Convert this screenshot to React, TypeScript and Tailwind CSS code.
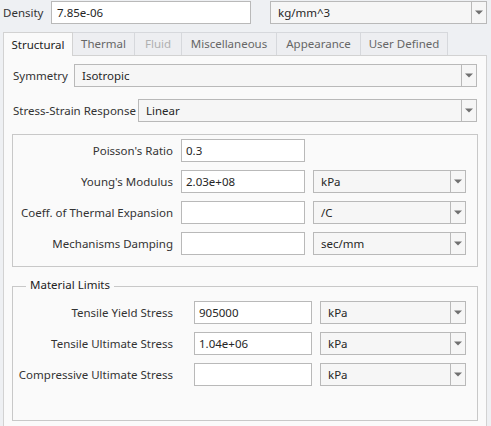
import React from "react";

const Arrow = () => (
  <svg width="8" height="5" viewBox="0 0 8 5">
    <path d="M0 0.5h8L4 4.5z" fill="#707070" />
  </svg>
);

const Select = ({ value, className }: { value: string; className: string }) => (
  <div className={`flex h-[23px] border border-[#b9b9b9] bg-[#f6f6f6] ${className}`}>
    <div className="flex flex-1 items-center pl-[7px] text-[#262626]">{value}</div>
    <div className="flex w-[15px] items-center justify-center border-l border-[#b9b9b9]">
      <Arrow />
    </div>
  </div>
);

const Input = ({ value, className }: { value: string; className: string }) => (
  <div className={`flex h-[23px] items-center border border-[#b9b9b9] bg-white pl-[4px] text-[#262626] ${className}`}>
    {value}
  </div>
);

const tabs = [
  { name: "Structural", active: true },
  { name: "Thermal" },
  { name: "Fluid", disabled: true },
  { name: "Miscellaneous" },
  { name: "Appearance" },
  { name: "User Defined" },
];

export default function App() {
  return (
    <div
      className="h-[426px] w-[491px] overflow-hidden whitespace-nowrap bg-[#eef0f3] text-[11.5px] leading-none text-[#333]"
      style={{ fontFamily: '"Segoe UI", "Noto Sans", "Open Sans", sans-serif' }}
    >
      {/* Density row */}
      <div className="flex items-center pt-[1px]">
        <div className="w-[51px] pl-[3px] text-[#333]">Density</div>
        <Input value="7.85e-06" className="w-[200px] pl-[5px]" />
        <div className="w-[19px]" />
        <Select value="kg/mm^3" className="w-[217px]" />
      </div>

      {/* Tabs */}
      <div className="ml-[3px] mt-[8px] flex h-[23px] items-stretch">
        {tabs.map((t) => (
          <div
            key={t.name}
            className={
              t.active
                ? "relative z-10 flex h-[24px] w-[70px] items-center justify-center border border-b-0 border-[#d2d2d2] bg-[#fafafa] text-[#222]"
                : `flex items-center justify-center border border-l-0 border-b-0 border-[#d6d8dc] bg-[#edeef1] ${
                    t.disabled ? "text-[#b0b0b0]" : "text-[#666]"
                  } ${
                    t.name === "Thermal"
                      ? "w-[62px]"
                      : t.name === "Fluid"
                      ? "w-[47px]"
                      : t.name === "Miscellaneous"
                      ? "w-[95px]"
                      : t.name === "Appearance"
                      ? "w-[84px]"
                      : "w-[87px]"
                  }`
            }
          >
            {t.name}
          </div>
        ))}
      </div>

      {/* Panel */}
      <div className="ml-[3px] h-[400px] w-[484px] border border-[#d2d2d2] bg-[#fafafa] pl-[8px] pt-[8px]">
        <div className="flex items-center">
          <div className="w-[62px] pl-[1px]">Symmetry</div>
          <Select value="Isotropic" className="w-[403px]" />
        </div>
        <div className="mt-[12px] flex items-center">
          <div className="w-[126px] pl-[1px]">Stress-Strain Response</div>
          <Select value="Linear" className="w-[339px]" />
        </div>

        {/* Group 1 */}
        <div className="mt-[12px] flex h-[133px] w-[466px] flex-col gap-[8px] border border-[#c8c8c8] pt-[4px]">
          {[
            { l: "Poisson's Ratio", v: "0.3", u: null },
            { l: "Young's Modulus", v: "2.03e+08", u: "kPa" },
            { l: "Coeff. of Thermal Expansion", v: "", u: "/C" },
            { l: "Mechanisms Damping", v: "", u: "sec/mm" },
          ].map((r) => (
            <div key={r.l} className="flex items-center">
              <div className="w-[160px] text-right">{r.l}</div>
              <div className="w-[8px]" />
              <Input value={r.v} className="w-[124px]" />
              <div className="w-[8px]" />
              {r.u && <Select value={r.u} className="w-[153px]" />}
            </div>
          ))}
        </div>

        {/* Group 2 */}
        <div className="relative mt-[19px] flex h-[135px] w-[466px] flex-col gap-[8px] border border-[#c8c8c8] pt-[14px]">
          <div className="absolute left-[13px] top-[-8px] bg-[#fafafa] px-[4px] text-[#222]">Material Limits</div>
          {[
            { l: "Tensile Yield Stress", v: "905000" },
            { l: "Tensile Ultimate Stress", v: "1.04e+06" },
            { l: "Compressive Ultimate Stress", v: "" },
          ].map((r) => (
            <div key={r.l} className="flex items-center">
              <div className="w-[160px] text-right">{r.l}</div>
              <div className="w-[21px]" />
              <Input value={r.v} className="w-[118px]" />
              <div className="w-[8px]" />
              <Select value="kPa" className="w-[146px]" />
            </div>
          ))}
        </div>
      </div>
    </div>
  );
}
